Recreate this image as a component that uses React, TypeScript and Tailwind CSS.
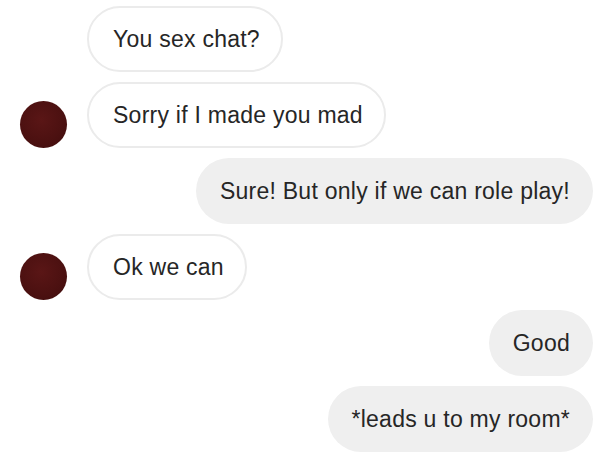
import React from 'react'

type Msg = { text: string; mine: boolean; avatar?: boolean }

const messages: Msg[] = [
  { text: 'You sex chat?', mine: false },
  { text: 'Sorry if I made you mad', mine: false, avatar: true },
  { text: 'Sure! But only if we can role play!', mine: true },
  { text: 'Ok we can', mine: false, avatar: true },
  { text: 'Good', mine: true },
  { text: '*leads u to my room*', mine: true },
]

function Avatar({ show }: { show?: boolean }) {
  if (!show) return <div className="w-[47px] h-[47px] shrink-0" />
  return (
    <div className="w-[47px] h-[47px] shrink-0 rounded-full bg-[radial-gradient(circle_at_45%_40%,#5a1616_0%,#4a1010_65%,#3a0b0b_100%)]" />
  )
}

export default function App() {
  return (
    <div
      className="w-[605px] h-[462px] bg-white flex flex-col gap-[10px] pt-[6px] overflow-hidden"
      style={{ fontFamily: '"Liberation Sans", Arial, sans-serif' }}
    >
      {messages.map((m, i) =>
        m.mine ? (
          <div key={i} className="flex justify-end pr-[12px]">
            <div className="h-[66px] flex items-center pl-[24px] pr-[23px] rounded-full bg-[#efefef] text-[23px] tracking-[0.25px] text-[#262626]">
              {m.text}
            </div>
          </div>
        ) : (
          <div key={i} className="flex items-end gap-[20px] pl-[20px]">
            <Avatar show={m.avatar} />
            <div className="h-[66px] flex items-center pl-[24px] pr-[21px] rounded-full bg-white border-2 border-[#ebebeb] text-[23px] tracking-[0.25px] text-[#262626]">
              {m.text}
            </div>
          </div>
        )
      )}
    </div>
  )
}
